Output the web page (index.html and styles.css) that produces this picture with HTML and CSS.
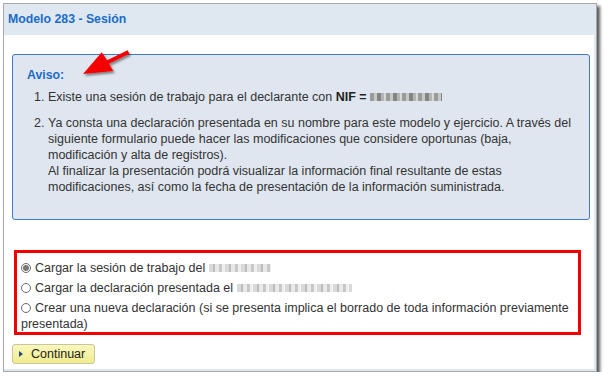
FILE: index.html
```html
<!DOCTYPE html>
<html lang="es">
<head>
<meta charset="utf-8">
<title>Modelo 283 - Sesión</title>
<link rel="stylesheet" href="styles.css">
</head>
<body>
<div class="window">
  <div class="title">Modelo 283 - Sesión</div>
  <div class="content">
    <div class="aviso">
      <div class="aviso-head">Aviso:</div>
      <ol class="aviso-list">
        <li>Existe una sesión de trabajo para el declarante con <b>NIF =</b> <span class="blur blur-nif"></span></li>
        <li>Ya consta una declaración presentada en su nombre para este modelo y ejercicio. A través del<br>siguiente formulario puede hacer las modificaciones que considere oportunas (baja,<br>modificación y alta de registros).<br>Al finalizar la presentación podrá visualizar la información final resultante de estas<br>modificaciones, así como la fecha de presentación de la información suministrada.</li>
      </ol>
    </div>
    <div class="options">
      <div class="option"><span class="radio checked"></span>Cargar la sesión de trabajo del <span class="blur blur-light blur-d1"></span></div>
      <div class="option"><span class="radio"></span>Cargar la declaración presentada el <span class="blur blur-light blur-d2"></span></div>
      <div class="option"><span class="radio"></span>Crear una nueva declaración (si se presenta implica el borrado de toda información previamente presentada)</div>
    </div>
    <button class="btn"><span class="tri"></span>Continuar</button>
    <svg class="arrow" width="60" height="40" viewBox="0 0 60 40">
      <defs>
        <filter id="sh" x="-20%" y="-20%" width="150%" height="160%">
          <feDropShadow dx="1.5" dy="2" stdDeviation="1.2" flood-color="#000" flood-opacity="0.45"/>
        </filter>
      </defs>
      <polygon filter="url(#sh)" fill="#f50000" points="47.6,5.2 27.1,15.2 21.7,7.3 3,29 33.3,26 28.9,18.8 49.4,8.8"/>
    </svg>
  </div>
</div>
</body>
</html>
```
FILE: styles.css
```css
* { box-sizing: border-box; }
html, body { margin: 0; padding: 0; background: #fff; }
body {
  font-family: "Liberation Sans", Arial, sans-serif;
  font-size: 12.5px;
  color: #333;
}
.window {
  position: relative;
  margin: 3px 0 0 3px;
  width: 594px;
  border: 1px solid #a8a8a8;
  background: #dfe8f1;
  padding: 0 2px 2px 0;
  box-shadow: 3px 3px 3px rgba(0,0,0,0.65);
}
.title {
  height: 31px;
  line-height: 31px;
  padding-left: 4px;
  font-weight: bold;
  color: #1b6cc8;
  font-size: 12.3px;
}
.content {
  position: relative;
  background: #fff;
  padding: 19px 4px 5px 8px;
}
.aviso {
  width: 578px;
  border: 1px solid #3d7bc4;
  border-radius: 3px;
  background: #dfe6ef;
  padding: 12px 6px 24px 14px;
  line-height: 16px;
}
.aviso-head {
  font-weight: bold;
  color: #1b6cc8;
  font-size: 12.3px;
}
.aviso-list {
  margin: 6px 0 0;
  padding-left: 21px;
  white-space: nowrap;
}
.aviso-list li { margin-bottom: 10px; }
.aviso-list li:last-child { margin-bottom: 0; }
.aviso-list b { color: #222; }
.blur {
  display: inline-block;
  height: 8px;
  vertical-align: 0;
}
.blur-nif {
  width: 72px;
  background: repeating-linear-gradient(90deg, #9a9a9a 0 4px, #c8c8c8 4px 7px, #858585 7px 11px, #b4b4b4 11px 14px, #d6d6d6 14px 16px);
}
.blur-light {
  background: repeating-linear-gradient(90deg, #d9d9d9 0 4px, #bdbdbd 4px 6px, #e8e8e8 6px 10px, #c8c8c8 10px 13px, #f0f0f0 13px 16px);
}
.blur-d1 { width: 62px; }
.blur-d2 { width: 115px; }
.options {
  margin: 30px 0 0 2px;
  width: 567px;
  border: 3px solid #f20000;
  padding: 7px 2px 0 4px;
  line-height: 16px;
}
.option { margin-bottom: 4px; }
.option:last-child { margin-bottom: 0; }
.radio {
  display: inline-block;
  width: 10px;
  height: 10px;
  border: 1px solid #6a6a6a;
  border-radius: 50%;
  margin-right: 4px;
  vertical-align: -1px;
  position: relative;
  background: #fff;
}
.radio.checked::after {
  content: "";
  position: absolute;
  left: 1px;
  top: 1px;
  width: 6px;
  height: 6px;
  border-radius: 50%;
  background: #777;
}
.btn {
  display: flex;
  align-items: center;
  margin-top: 9px;
  width: 83px;
  height: 20px;
  padding: 0 0 0 6px;
  border: 1px solid #c9c59c;
  border-radius: 3px;
  background: linear-gradient(#faf7bd, #f1ec8f);
  font-family: "Liberation Sans", Arial, sans-serif;
  font-size: 12.5px;
  color: #222;
}
.tri {
  display: inline-block;
  width: 0;
  height: 0;
  border-top: 3.5px solid transparent;
  border-bottom: 3.5px solid transparent;
  border-left: 4px solid #1d4f7a;
  margin-right: 8px;
}
.arrow {
  position: absolute;
  left: 76px;
  top: 10px;
}
```
